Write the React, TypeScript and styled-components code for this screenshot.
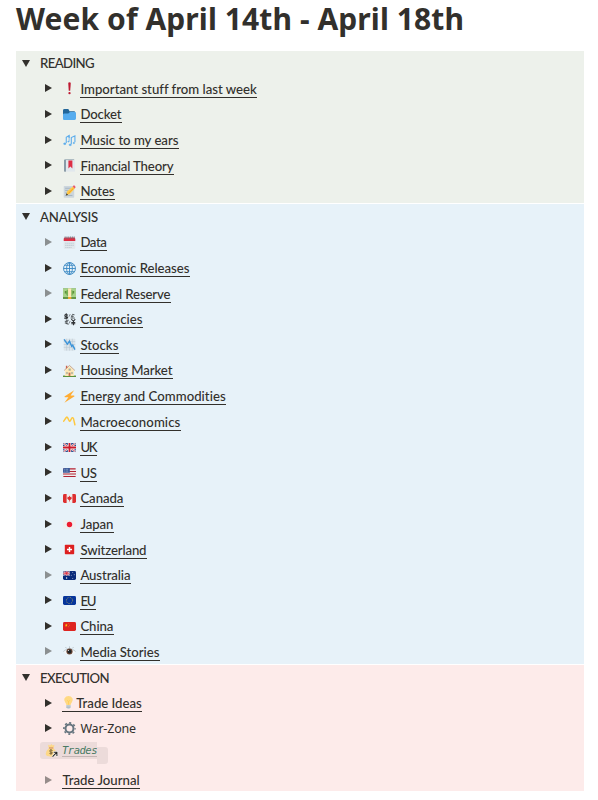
import React, { useLayoutEffect, useRef } from "react";
import styled, { createGlobalStyle } from "styled-components";

const INK = "#32302c";

const GlobalStyle = createGlobalStyle`
  * { box-sizing: border-box; }
  html, body { margin: 0; padding: 0; background: #fff; }
  body { font-family: Lato, "Liberation Sans", sans-serif; font-weight: 500; color: ${INK}; }
`;

const Page = styled.main`
  width: 598px;
  height: 800px;
  padding: 0 14px 0 16px;
  overflow: hidden;
`;

const Title = styled.h1`
  margin: 0;
  height: 51px;
  padding-top: 1px;
  font-family: "Noto Sans", "Open Sans", sans-serif;
  font-size: 30px;
  font-weight: 700;
  line-height: 36px;
  white-space: nowrap;
`;

const Section = styled.section<{ $tint: string; $height: number; $inset?: number }>`
  height: ${(p) => p.$height}px;
  padding-top: ${(p) => p.$inset ?? 0}px;
  margin-bottom: 1px;
  background: ${(p) => p.$tint};
`;

const SectionHeader = styled.header`
  display: flex;
  align-items: center;
  height: 25.6px;
  padding-left: 6px;
  padding-bottom: 1px;
  gap: 10px;
  font-size: 13.2px;
  line-height: 18px;
`;

const Row = styled.div`
  display: flex;
  align-items: center;
  height: 25.6px;
  padding-left: 29px;
`;

const Toggle = styled.svg<{ $faded?: boolean }>`
  flex: none;
  width: 7px;
  height: 8px;
  margin: -2px 11px 0 0;
  fill: ${INK};
  opacity: ${(p) => (p.$faded ? 0.5 : 1)};
`;

const OpenToggle = styled.svg`
  flex: none;
  width: 8px;
  height: 7px;
  fill: ${INK};
`;

const Glyph = styled.svg`
  flex: none;
  width: 13px;
  height: 13px;
  margin-top: -1px;
`;

const Label = styled.span<{ $plain?: boolean; $lead?: number }>`
  display: flex;
  align-items: center;
  height: 17px;
  margin-left: ${(p) => p.$lead ?? 4}px;
  padding-left: 0.4px;
  padding-right: 0.3px;
  border-bottom: 1px solid ${(p) => (p.$plain ? "transparent" : INK)};
  font-family: ${(p) => (p.$plain ? '"Noto Sans", sans-serif' : "inherit")};
  font-weight: ${(p) => (p.$plain ? 400 : 500)};
  font-size: ${(p) => (p.$plain ? 12.5 : 13.2)}px;
  line-height: 16px;
`;

const Text = styled.span`
  display: inline-block;
  white-space: nowrap;
`;

const TradesTag = styled.span`
  display: flex;
  align-items: center;
  width: 57px;
  height: 17px;
  margin-left: -5px;
  margin-top: -8px;
  padding-left: 5px;
  border-radius: 3px 0 0 3px;
  background: #ecdbda;
`;

const TradesLink = styled.span`
  height: 13px;
  margin-left: 4px;
  margin-top: -1px;
  border-bottom: 1px solid #c4b6b4;
  color: #487a63;
  font: italic 10.5px/12px "DejaVu Sans Mono", monospace;
`;

const TagTail = styled.span`
  width: 11px;
  height: 17px;
  margin-top: 2px;
  border-radius: 0 3px 3px 0;
  background: #ecdbda;
`;

/* Tracks the text so that it fills the given width. */
function Fit({ width, children }: { width: number; children: string }) {
  const ref = useRef<HTMLSpanElement>(null);
  useLayoutEffect(() => {
    const el = ref.current;
    if (!el) return;
    const fit = () => {
      el.style.letterSpacing = "0px";
      const natural = el.getBoundingClientRect().width;
      el.style.letterSpacing = `${(width - natural) / children.length}px`;
    };
    fit();
    document.fonts?.ready.then(fit);
  }, [width, children]);
  return <Text ref={ref}>{children}</Text>;
}

const flag = (base: string, inner?: React.ReactNode) => (
  <>
    <rect x="0" y="5.500" width="36" height="25" rx="4" fill={base} />
    {inner}
  </>
);

const icons: Record<string, React.ReactNode> = {
  alert: (
    <g fill="#be1931">
      <path d="M14.500 2q3.500-3 7 0l-1.500 22h-4z" />
      <circle cx="18" cy="31" r="3.200" />
    </g>
  ),
  folder: (
    <>
      <path d="M0 29V7q0-4 4-4h9q3 0 4 4l1 2h12q4 0 4 4v15z" fill="#226699" />
      <path d="M2 33q-2 0-2-3V18q0-3 4-3h10q2 0 3-2t4-2h11q4 0 4 4v14q0 4-4 4z" fill="#55acee" />
    </>
  ),
  music: (
    <g fill="#5dadec" stroke="#5dadec">
      <path d="M9 25V9l8-5v7M23 28V10l10-5v18" fill="none" strokeWidth="3" />
      <ellipse cx="5" cy="27" rx="3.500" ry="2.500" />
      <ellipse cx="20" cy="30" rx="3.500" ry="2.500" />
      <ellipse cx="30" cy="25" rx="2.500" ry="2" />
      <path d="M17 4v17" strokeWidth="2" />
      <ellipse cx="15" cy="21" rx="2" ry="1.500" />
    </g>
  ),
  book: (
    <>
      <path d="M3 3q0-2 3-2h25v31H7q-4 0-4 3z" fill="#99aab5" />
      <path d="M8 3h25v32H8z" fill="#e1e8ed" />
      <path d="M3 3h5v32H5q-2 0-2-2z" fill="#8899a6" />
      <path d="M15 4h11v22l-5.500-5-5.500 5z" fill="#dd2e44" />
    </>
  ),
  memo: (
    <>
      <rect x="2" y="3" width="29" height="32" rx="2" fill="#ccd6dd" />
      <path d="M6 9h16M6 15h10M6 22h7M6 29h20" stroke="#99aab5" strokeWidth="2" />
      <path d="M8 29l4-12L27 4l6 6-14 15z" fill="#ffcc4d" />
      <path d="M27 4l3-3q3 0 5 5l-3 4z" fill="#ea596e" />
      <path d="M8 29l2-6 4 4z" fill="#292f33" />
      <path d="M15 23L29 9" stroke="#f4900c" strokeWidth="2" />
    </>
  ),
  calendar: (
    <>
      <rect x="2" y="5" width="32" height="31" rx="3" fill="#e1e8ed" />
      <path d="M2 14V8q0-4 4-4h24q4 0 4 4v6z" fill="#dd2e44" />
      <path d="M6 1v7m5-7v7m5-7v7m5-7v7m5-7v7m5-7v7" stroke="#66757f" strokeWidth="2" />
      <path d="M6 20h24M6 26h24M6 32h18" stroke="#c5d0d8" strokeWidth="3" strokeDasharray="4 1" />
    </>
  ),
  globe: (
    <g fill="none" stroke="#3b88c3" strokeWidth="2.500">
      <circle cx="18" cy="18" r="16.500" />
      <ellipse cx="18" cy="18" rx="8" ry="16.500" />
      <path d="M18 1v34M1 18h34M4 9h28M4 27h28" />
    </g>
  ),
  money: (
    <>
      <rect y="4" width="36" height="29" fill="#5c913b" />
      <rect y="4" width="36" height="24" fill="#a7d28b" />
      <circle cx="18" cy="16" r="10" fill="#77b255" />
      <path d="M5 11h4v7H5zm22 0h4v7h-4z" fill="#5c913b" />
      <path d="M14 4h9v24h-9z" fill="#ffe8b6" />
      <path d="M14 28h9v5h-9z" fill="#ffac33" />
    </>
  ),
  currency: (
    <g fill="none" stroke="#303336" strokeWidth="2.800">
      <path d="M14 6q-9-4-9 1t8 4q1 6-10 3M9 1v17M23 17l6 6 5-6M29 23v11M23 26h11M23 30h11" />
      <path d="M32 5q-7-4-7 2v6m-3-4h8m-9 5h12M16 20q-8-2-8 5t8 6M5 23h9M5 28h9" strokeWidth="2" />
      <path d="M20 3l-3 7M20 22l-3 7" strokeWidth="1.500" />
    </g>
  ),
  stocks: (
    <>
      <rect x="2" y="2" width="32" height="33" rx="2" fill="#dce5eb" />
      <path d="M2 10h32M2 18h32M2 26h32M10 2v33M18 2v33M26 2v33" stroke="#b6c5d0" strokeWidth="1.500" />
      <path d="M3 4l9 13 6-8 6 14 3-3 6 12" fill="none" stroke="#3b94d9" strokeWidth="4" />
    </>
  ),
  house: (
    <>
      <path d="M0 32h36v4H0z" fill="#5c913b" />
      <path d="M6 17L18 6l12 11v16H6z" fill="#ffe8b6" />
      <path d="M3 18L18 4l15 14" fill="none" stroke="#b98a68" strokeWidth="2" />
      <path d="M8 5h4v5l-4 4z" fill="#c9654f" />
      <path d="M15.500 24h5v9h-5z" fill="#c1694f" />
      <path d="M16 13h5v5h-5zM9 23h4v4H9zm14 0h4v4h-4z" fill="#8bb3c8" stroke="#c8ab72" />
    </>
  ),
  bolt: <path d="M31 1L5 17q-3 2 1 3h9L4 35l27-17q3-2-1-3h-9z" fill="#ffac33" />,
  macro: (
    <path
      d="M2 17L9 7q3-3 4 1l4 8q2 3 4-1l3-6q3-4 5 1l4 17"
      fill="none"
      stroke="#ffc83d"
      strokeWidth="4"
      strokeLinejoin="round"
      strokeLinecap="round"
    />
  ),
  uk: flag(
    "#2f4f8f",
    <>
      <path d="M2 7l32 22M34 7L2 29" stroke="#eee" strokeWidth="6" />
      <path d="M2 7l32 22M34 7L2 29" stroke="#cf1b2b" strokeWidth="2" />
      <path d="M18 5.500v25M0 18h36" stroke="#eee" strokeWidth="9" />
      <path d="M18 5.500v25M0 18h36" stroke="#cf1b2b" strokeWidth="5" />
    </>
  ),
  us: flag(
    "#eeeeee",
    <>
      <path d="M1 8h34M0 15h36M0 22h36M1 29h34" stroke="#b22334" strokeWidth="3" />
      <path d="M4 5.500h15V19H0V9.500q0-4 4-4z" fill="#3c5b9a" />
      <path d="M4 9h12M4 14h12" stroke="#c5d3e6" strokeDasharray="2 2" strokeWidth="2" />
    </>
  ),
  canada: flag(
    "#dd2e2f",
    <>
      <path d="M10 5.500h16v25H10z" fill="#eee" />
      <path d="M18 10l2 4 4-1-1 4 2 1-5 4h-1v4h-2v-4h-1l-5-4 2-1-1-4 4 1z" fill="#dd2e2f" />
    </>
  ),
  japan: flag("#eeeeee", <circle cx="18" cy="18" r="7.500" fill="#ed1b2f" />),
  swiss: (
    <>
      <rect x="5" y="5" width="26" height="26" rx="2" fill="#dd2020" />
      <path d="M18 11v14M11 18h14" stroke="#fff" strokeWidth="4" />
    </>
  ),
  australia: flag(
    "#092b7b",
    <>
      <path d="M2 7l16 11M18 7L1 18" stroke="#eee" strokeWidth="3" />
      <path d="M10 5.500v13M0 12h19" stroke="#eee" strokeWidth="5" />
      <path d="M10 5.500v13M0 12h19M3 7l13 10M16 7L3 17" stroke="#d9253a" strokeWidth="2" />
      <g fill="#fff">
        <circle cx="10" cy="25" r="2" />
        <circle cx="27" cy="10" r="1.300" />
        <circle cx="31" cy="16" r="1.300" />
        <circle cx="23" cy="17" r="1.300" />
        <circle cx="27" cy="26" r="1.300" />
      </g>
    </>
  ),
  eu: flag(
    "#06359b",
    <circle cx="18" cy="18" r="8.500" fill="none" stroke="#e8c83c" strokeWidth="2.500" strokeDasharray="2.200 4.475" />
  ),
  china: flag(
    "#de2420",
    <g fill="#ffde02">
      <path d="M9 10l1 3h3l-2.500 2 1 3.500L9 16.500 6.500 18.500l1-3.500L5 13h3z" />
      <circle cx="16" cy="9" r="1" />
      <circle cx="18" cy="14" r="1" />
      <circle cx="15" cy="19" r="1" />
    </g>
  ),
  eye: (
    <>
      <path d="M0 19Q18 4 36 19q-17 14-36 0z" fill="#f5f8fa" />
      <path d="M1 18Q18 2 35 18" fill="none" stroke="#aab6be" strokeWidth="2" />
      <circle cx="18" cy="18" r="8.500" fill="#6b4635" />
      <circle cx="18" cy="18" r="5.500" fill="#202427" />
      <circle cx="15" cy="15" r="1.500" fill="#fff" />
      <path d="M10 9L7 6m11 2V4m8 5l3-3" stroke="#88939a" strokeWidth="1.500" />
    </>
  ),
  bulb: (
    <>
      <path d="M12 25q0-4-3-7Q4 12 7 6q4-6 11-6t11 6q3 6-2 12-3 3-3 7z" fill="#ffd983" />
      <path d="M14 12l4 3 4-3M18 15v9" fill="none" stroke="#ffcc4d" strokeWidth="2" />
      <path d="M12 25h12v6q-2 5-6 5t-6-5z" fill="#ccd6dd" />
      <path d="M12 28h12m-12 4h11" stroke="#99aab5" strokeWidth="1.500" />
    </>
  ),
  gear: (
    <>
      <circle cx="18" cy="18" r="11" fill="none" stroke="#66757f" strokeWidth="5.500" />
      <circle cx="18" cy="18" r="15.500" fill="none" stroke="#66757f" strokeWidth="4.500" strokeDasharray="5.700 6.474" strokeDashoffset="2.850" />
    </>
  ),
  bag: (
    <>
      <path d="M11 11q-3-5-2-9l5 2 4-4 3 4 5-2q0 5-3 9 9 8 9 17 0 7-15 7T2 28q0-9 9-17z" fill="#fdd888" />
      <path d="M11 11h12" stroke="#bf6952" strokeWidth="2" />
      <path d="M21 18q-8-4-8 1t7 4q2 6-8 3M16.500 14v16" fill="none" stroke="#67532c" strokeWidth="2" />
      <path d="M21 35L32 24M23 23h10v11" fill="none" stroke="#fff" strokeWidth="6" />
      <path d="M21 35L32 24M24 23h9v10" fill="none" stroke="#292825" strokeWidth="3" />
    </>
  ),
};

type Item = { icon: string; text: string; width: number; faded?: boolean };

const reading: Item[] = [
  { icon: "alert", text: "Important stuff from last week", width: 176 },
  { icon: "folder", text: "Docket", width: 41 },
  { icon: "music", text: "Music to my ears", width: 98 },
  { icon: "book", text: "Financial Theory", width: 93 },
  { icon: "memo", text: "Notes", width: 34 },
];

const analysis: Item[] = [
  { icon: "calendar", text: "Data", width: 26, faded: true },
  { icon: "globe", text: "Economic Releases", width: 109 },
  { icon: "money", text: "Federal Reserve", width: 90, faded: true },
  { icon: "currency", text: "Currencies", width: 62 },
  { icon: "stocks", text: "Stocks", width: 38 },
  { icon: "house", text: "Housing Market", width: 92 },
  { icon: "bolt", text: "Energy and Commodities", width: 145.5 },
  { icon: "macro", text: "Macroeconomics", width: 100 },
  { icon: "uk", text: "UK", width: 16 },
  { icon: "us", text: "US", width: 16 },
  { icon: "canada", text: "Canada", width: 43 },
  { icon: "japan", text: "Japan", width: 33 },
  { icon: "swiss", text: "Switzerland", width: 66 },
  { icon: "australia", text: "Australia", width: 50, faded: true },
  { icon: "eu", text: "EU", width: 15 },
  { icon: "china", text: "China", width: 33 },
  { icon: "eye", text: "Media Stories", width: 79, faded: true },
];

const Icon = ({ name }: { name: string }) => (
  <Glyph viewBox="0 0 36 36" aria-hidden>
    {icons[name]}
  </Glyph>
);

const Arrow = ({ faded }: { faded?: boolean }) => (
  <Toggle viewBox="0 0 7 8" $faded={faded} aria-hidden>
    <path d="M0 0l7 4-7 4z" />
  </Toggle>
);

const Header = ({ text, width }: { text: string; width: number }) => (
  <SectionHeader>
    <OpenToggle viewBox="0 0 8 7" aria-hidden>
      <path d="M0 0h8L4 7z" />
    </OpenToggle>
    <Fit width={width}>{text}</Fit>
  </SectionHeader>
);

const ItemRow = ({ icon, text, width, faded }: Item) => (
  <Row>
    <Arrow faded={faded} />
    <Icon name={icon} />
    <Label>
      <Fit width={width}>{text}</Fit>
    </Label>
  </Row>
);

export default function App() {
  return (
    <>
      <GlobalStyle />
      <Page>
        <Title>
          <Fit width={448}>Week of April 14th - April 18th</Fit>
        </Title>
        <Section $tint="#edf1eb" $height={152}>
          <Header text="READING" width={54} />
          {reading.map((item) => (
            <ItemRow key={item.text} {...item} />
          ))}
        </Section>
        <Section $tint="#e7f2f9" $height={460} $inset={0.6}>
          <Header text="ANALYSIS" width={58} />
          {analysis.map((item) => (
            <ItemRow key={item.text} {...item} />
          ))}
        </Section>
        <Section $tint="#fdebea" $height={126} $inset={0.4}>
          <Header text="EXECUTION" width={69} />
          <Row>
            <Arrow />
            <Label $lead={-1}>
              <Icon name="bulb" />
              <Text>&#8202;</Text>
              <Fit width={65.5}>Trade Ideas</Fit>
            </Label>
          </Row>
          <Row>
            <Arrow />
            <Icon name="gear" />
            <Label $plain>
              <Fit width={55.5}>War-Zone</Fit>
            </Label>
          </Row>
          <Row>
            <TradesTag>
              <Icon name="bag" />
              <TradesLink>
                <Fit width={35}>Trades</Fit>
              </TradesLink>
            </TradesTag>
            <TagTail />
          </Row>
          <Row>
            <Arrow faded />
            <Label $lead={-1}>
              <Fit width={77.3}>Trade Journal</Fit>
            </Label>
          </Row>
        </Section>
      </Page>
    </>
  );
}
